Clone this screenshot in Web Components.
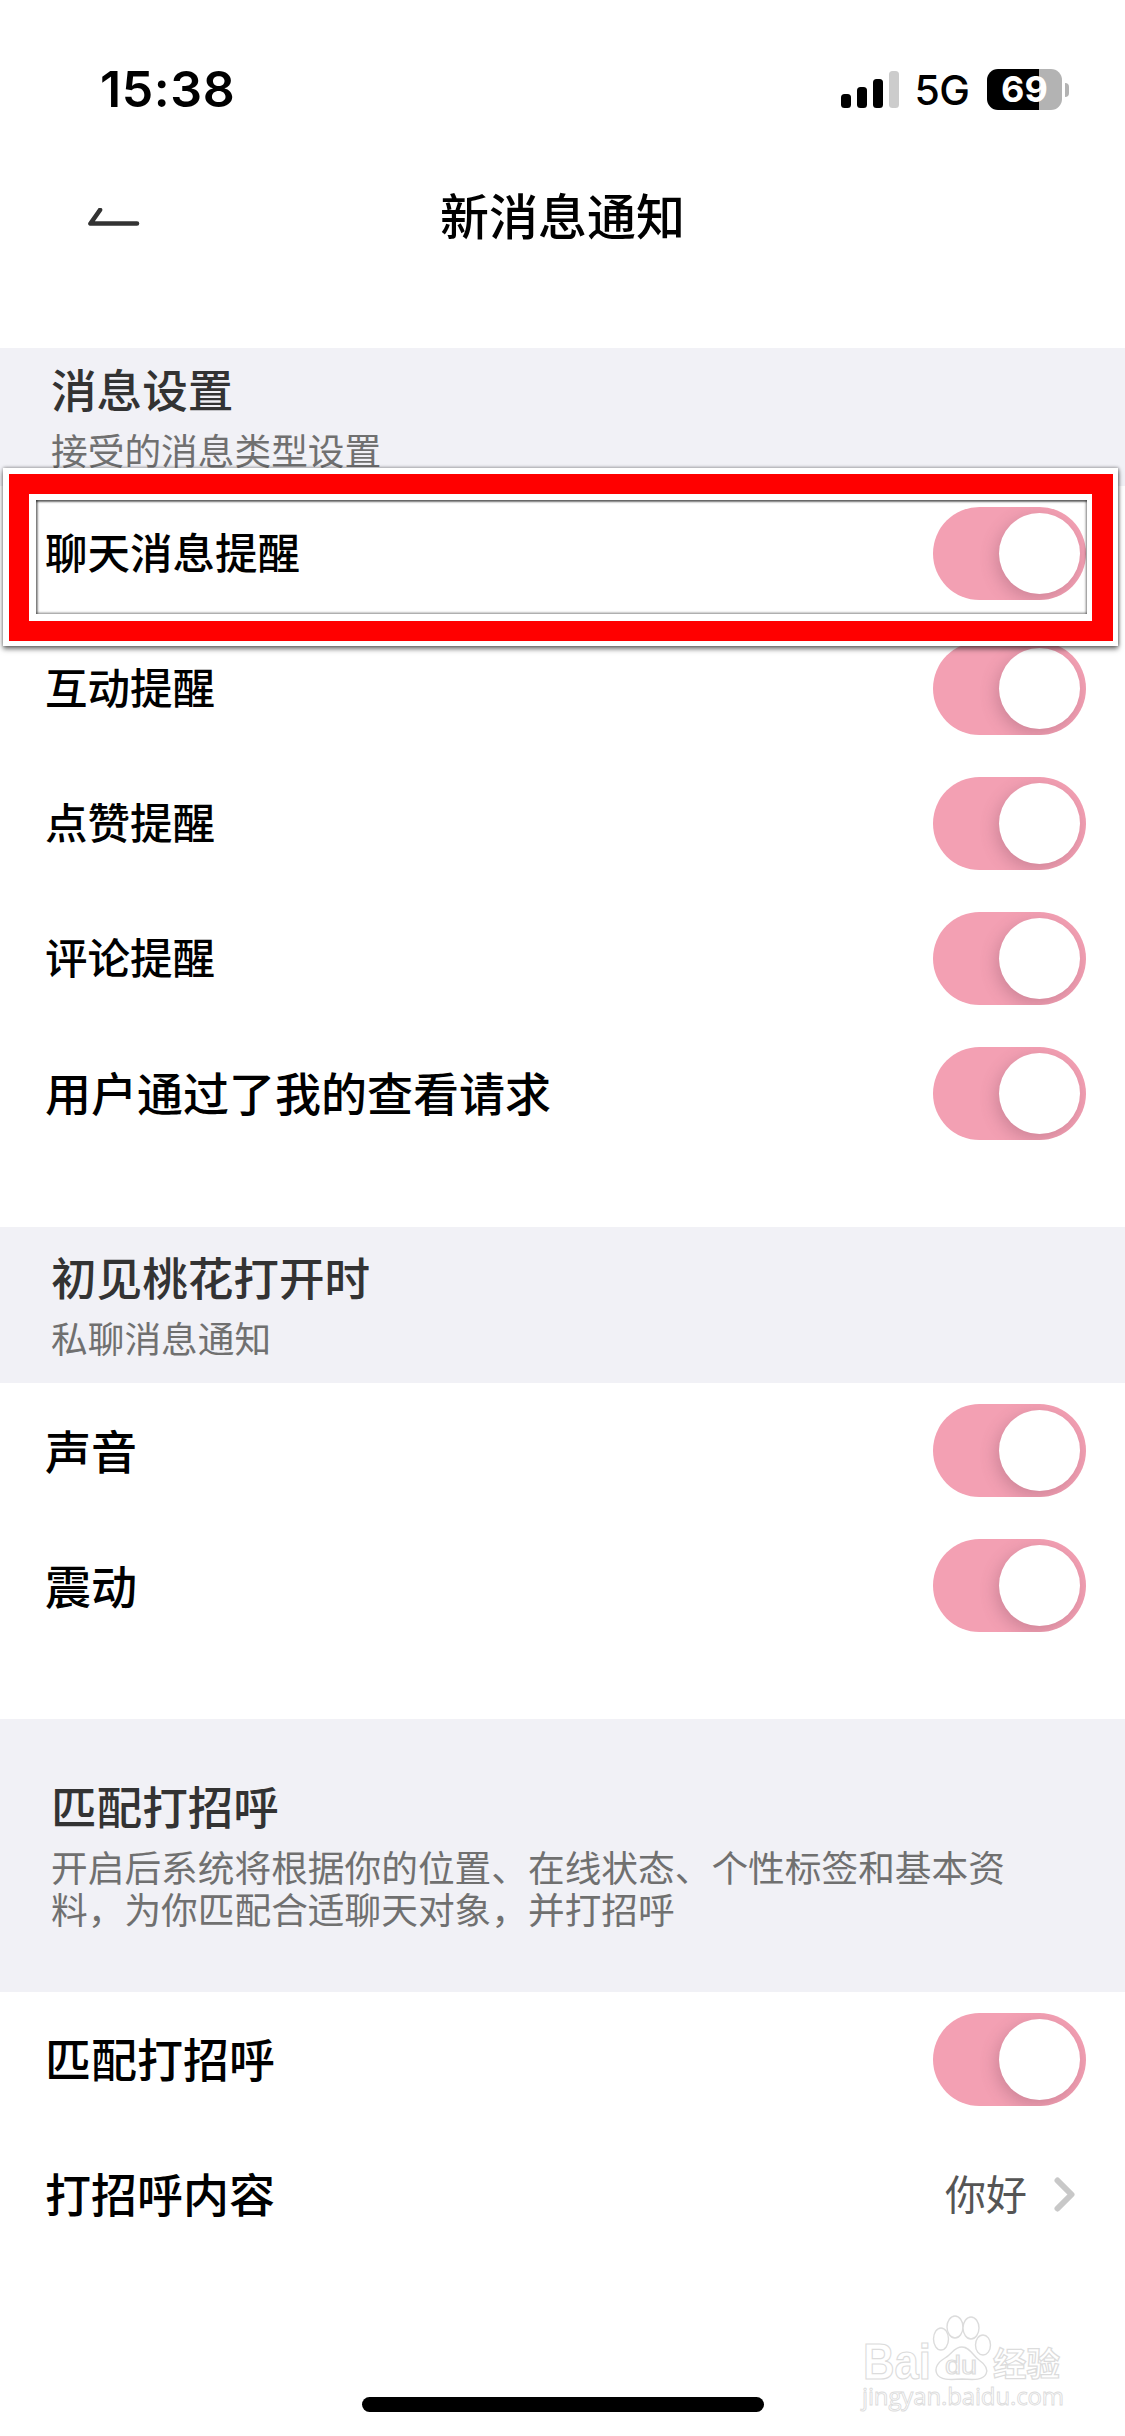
<!DOCTYPE html>
<html lang="zh-CN">
<head>
<meta charset="utf-8">
<title>新消息通知</title>
<style>
html,body{margin:0;padding:0;background:#fff;}
body{font-family:"Noto Sans CJK SC","Noto Sans",sans-serif;}
</style>
</head>
<body>
<settings-page>
  <status-bar></status-bar>
  <nav-bar>新消息通知</nav-bar>

  <section-head title="消息设置" style="--top:14px;--bottom:16px">接受的消息类型设置</section-head>
  <toggle-row style="--fs:42.5px;--pb:5px">聊天消息提醒</toggle-row>
  <toggle-row style="--fs:42.5px;--pb:5px">互动提醒</toggle-row>
  <toggle-row style="--fs:42.5px;--pb:5px">点赞提醒</toggle-row>
  <toggle-row style="--fs:42.5px;--pb:5px">评论提醒</toggle-row>
  <toggle-row style="--pb:5px">用户通过了我的查看请求</toggle-row>

  <section-head title="初见桃花打开时" style="--top:23px;--bottom:25px;--above:66px">私聊消息通知</section-head>
  <toggle-row>声音</toggle-row>
  <toggle-row>震动</toggle-row>

  <section-head title="匹配打招呼" style="--top:60px;--bottom:63px;--above:66px">开启后系统将根据你的位置、在线状态、个性标签和基本资料，为你匹配合适聊天对象，并打招呼</section-head>
  <toggle-row style="--pb:5px">匹配打招呼</toggle-row>
  <value-row value="你好">打招呼内容</value-row>

  <red-highlight></red-highlight>
  <home-bar></home-bar>
  <baidu-mark></baidu-mark>
</settings-page>

<script>
function def(name, html){
  customElements.define(name, class extends HTMLElement{
    constructor(){
      super();
      const s=this.attachShadow({mode:"open"});
      s.innerHTML=typeof html==="function"?html(this):html;
    }
    connectedCallback(){
      if(typeof html==="function"){ this.shadowRoot.innerHTML=html(this); }
    }
  });
}

def("settings-page",`<style>
:host{display:block;position:relative;width:1125px;height:2436px;overflow:hidden;background:#fff;
  font-family:"Noto Sans CJK SC","Noto Sans",sans-serif;}
</style><slot></slot>`);

def("status-bar",`<style>
:host{display:flex;align-items:center;justify-content:space-between;box-sizing:border-box;
  height:150px;padding:60px 56px 32px 100px;color:#000;}
.time{font:600 50px/58px Inter,"Liberation Sans",sans-serif;letter-spacing:.6px;}
.right{display:flex;align-items:center;}
.net{font:500 41px/58px Inter,"Liberation Sans",sans-serif;margin:2px 18px 0 16px;letter-spacing:-.8px;}
.bat{position:relative;display:flex;align-items:center;justify-content:center;width:75px;height:41px;border-radius:11px;
  background:linear-gradient(90deg,#000 0 52px,#b3b3b3 52px);color:#fff;margin-right:7px;
  font:700 36px/41px Inter,"Liberation Sans",sans-serif;}
.bat::after{content:"";position:absolute;left:78px;top:14px;width:4px;height:14px;border-radius:0 7px 7px 0;background:#b3b3b3;}
svg{display:block}
</style>
<span class="time">15:38</span>
<div class="right">
  <svg width="58" height="37" viewBox="0 0 58 37">
    <rect x="0" y="23" width="10" height="14" rx="3.5"/>
    <rect x="16" y="16" width="10" height="21" rx="3.5"/>
    <rect x="32" y="8" width="10" height="29" rx="3.5"/>
    <rect x="48" y="0" width="10" height="37" rx="3.5" fill="#ccc"/>
  </svg>
  <span class="net">5G</span>
  <span class="bat">69</span>
</div>`);

def("nav-bar",`<style>
:host{display:grid;grid-template-columns:1fr auto 1fr;align-items:center;height:136px;margin-bottom:62px;}
.back{padding-left:86px;display:block;}
.title{font-size:49px;line-height:60px;font-weight:500;color:#000;padding-bottom:9px;}
</style>
<svg class="back" width="56" height="20" viewBox="0 0 56 20">
  <path d="M14 2 L4.5 15.5 L51 15.5" fill="none" stroke="#333" stroke-width="4.6" stroke-linecap="round" stroke-linejoin="round"/>
</svg>
<div class="title"><slot></slot></div><span></span>`);

def("section-head",el=>`<style>
:host{display:block;background:#f1f1f6;margin-top:var(--above,0);padding:var(--top) 50px var(--bottom) 51px;}
.t{font-size:45.6px;line-height:52px;font-weight:500;color:#333;margin-bottom:14px;}
.s{font-size:36.7px;line-height:42px;color:#707070;}
</style>
<div class="t">${el.getAttribute("title")||""}</div>
<div class="s"><slot></slot></div>`);

def("pink-switch",`<style>
:host{display:block;position:relative;width:153px;height:93px;border-radius:46.5px;background:#f3a0b3;overflow:hidden;flex:none;}
.knob{position:absolute;left:66px;top:6px;width:81px;height:81px;border-radius:50%;background:#fff;
  box-shadow:-3px 5px 16px rgba(120,70,90,.3);}
</style><div class="knob"></div>`);

def("toggle-row",`<style>
:host{display:flex;align-items:center;justify-content:space-between;height:135px;box-sizing:border-box;
  padding:0 39px 0 45px;background:#fff;}
.l{font-size:var(--fs,46px);line-height:56px;font-weight:500;color:#000;padding-bottom:var(--pb,3px);}
</style><div class="l"><slot></slot></div><pink-switch></pink-switch>`);

def("value-row",el=>`<style>
:host{display:flex;align-items:center;justify-content:space-between;height:135px;box-sizing:border-box;
  padding:0 50px 0 45px;background:#fff;}
.l{font-size:46px;line-height:56px;font-weight:500;color:#000;padding-bottom:5px;}
.r{display:flex;align-items:center;gap:27px;}
.v{font-size:41px;line-height:56px;color:#555;padding-bottom:5px;}
svg{display:block}
</style><div class="l"><slot></slot></div>
<div class="r"><span class="v">${el.getAttribute("value")||""}</span>
<svg width="21" height="35" viewBox="0 0 21 35"><path d="M3.5 3.5 L17.5 17.5 L3.5 31.5" fill="none" stroke="#c8c8c8" stroke-width="6" stroke-linecap="round" stroke-linejoin="round"/></svg></div>`);

def("red-highlight",`<style>
:host{display:block;position:absolute;left:3px;top:468px;width:1115px;height:178px;box-sizing:border-box;
  border:solid #fff;border-width:6px 5px 5px 6px;box-shadow:0 3px 5px rgba(0,0,0,.55),1px 0 3px rgba(0,0,0,.25),0 -1px 3px rgba(0,0,0,.15);}
.red{box-sizing:border-box;height:100%;border:20px solid #f00;border-right-width:21px;}
.hole{box-sizing:border-box;height:100%;border:solid #fff;border-width:6px 5px 7px 7px;}
.line{box-sizing:border-box;height:100%;box-shadow:inset 0 2px 2px rgba(0,0,0,.55),inset 2px 0 2px rgba(0,0,0,.4),inset -2px 0 2px rgba(0,0,0,.2),inset 0 -2px 2px rgba(0,0,0,.2);}
</style><div class="red"><div class="hole"><div class="line"></div></div></div>`);

def("home-bar",`<style>
:host{display:block;position:absolute;left:362px;top:2397px;width:402px;height:15px;border-radius:7.5px;background:#000;}
</style>`);

def("baidu-mark",`<style>
:host{display:block;position:absolute;left:855px;top:2296px;width:225px;height:140px;}
svg{display:block;overflow:visible}
text{fill:#fff;stroke:#dcdcdc;stroke-width:1.2px;}
.b{font-family:"Liberation Sans",sans-serif;font-weight:700;}
.c{font-family:"Noto Sans CJK SC",sans-serif;font-weight:700;}
.j{font-family:"Open Sans","Liberation Sans",sans-serif;stroke-width:.9px;}
ellipse,path{fill:#fff;stroke:#dcdcdc;stroke-width:1.4px;}
</style>
<svg width="225" height="140" viewBox="855 2296 225 140">
  <text class="b" x="863" y="2379" font-size="50" textLength="68" lengthAdjust="spacingAndGlyphs">Bai</text>
  <ellipse cx="941" cy="2339" rx="7.5" ry="11"/>
  <ellipse cx="955" cy="2327" rx="8" ry="11"/>
  <ellipse cx="971" cy="2328" rx="8" ry="11"/>
  <ellipse cx="983" cy="2345" rx="7.5" ry="10"/>
  <path d="M962 2347 C970 2347 973 2356 979 2360 C986 2365 988 2370 986 2374 C983 2380 975 2380 962 2379 C949 2380 940 2380 937 2374 C934 2368 938 2362 945 2358 C952 2354 954 2347 962 2347Z"/>
  <text class="b" x="945" y="2374" font-size="26" textLength="32" lengthAdjust="spacingAndGlyphs" style="font-weight:400">du</text>
  <text class="c" x="993" y="2376" font-size="33.5">经验</text>
  <text class="j" x="862" y="2405" font-size="24" textLength="202" lengthAdjust="spacing">jingyan.baidu.com</text>
</svg>`);
</script>
</body>
</html>
